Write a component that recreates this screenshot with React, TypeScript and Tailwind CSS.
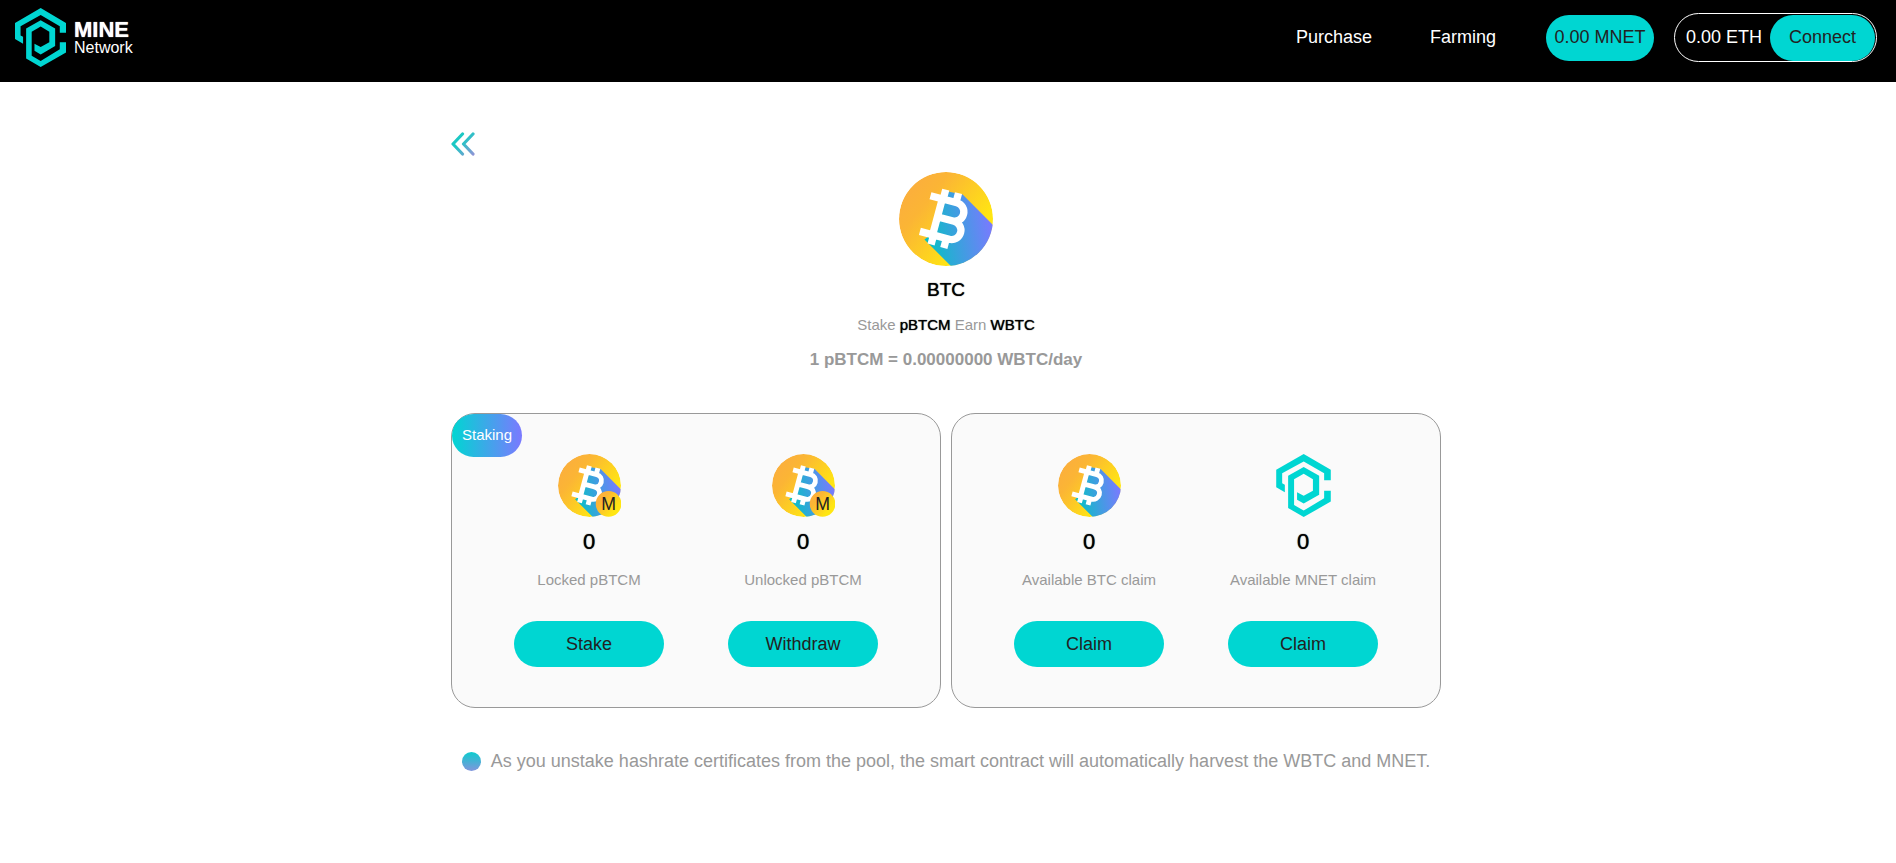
import type { ReactNode } from 'react';

const strong = '[text-shadow:0_0_1px_currentColor]';

function MineMark({ className }: { className: string }) {
  return (
    <svg viewBox="0 0 55 63.5" className={className} aria-hidden="true" fill="#00d6d2">
      <path d="M0 16 27.700 0 55 16V26.500H48.300V19.500L27.700 7.500 6 19.500V29.500L8.700 31V38.500L0 33.500Z" />
      <path d="M12 22 27.700 13.200 43.300 22V41L27.700 50 21 46V38.500L27.700 42 37 37V25.500L27.700 20 18 25.500V51.500L27.700 57 48.300 44.500V37H55V48L27.700 63.500 12 54.500Z" />
    </svg>
  );
}

function BtcCoin({ id, className, badge = false }: { id: string; className: string; badge?: boolean }) {
  return (
    <svg viewBox="0 0 96 96" className={className} role="img" aria-label="Bitcoin">
      <defs>
        <linearGradient id={`${id}-gold`} x1="0.1" y1="0.25" x2="0.85" y2="0.85">
          <stop offset="0" stopColor="#fbb03b" />
          <stop offset="0.200" stopColor="#fbb535" />
          <stop offset="0.850" stopColor="#ffe612" />
        </linearGradient>
        <linearGradient id={`${id}-shade`} x1="24" y1="68" x2="96" y2="56" gradientUnits="userSpaceOnUse">
          <stop offset="0" stopColor="#00c5c0" />
          <stop offset="1" stopColor="#7b79ff" />
        </linearGradient>
        <clipPath id={`${id}-clip`}>
          <circle cx="48" cy="48" r="48" />
        </clipPath>
      </defs>
      <g clipPath={`url(#${id}-clip)`}>
        <circle cx="48" cy="48" r="48" fill={`url(#${id}-gold)`} />
        <path d="M50 20 65 23 110 68V110H67L26 69 38 60Z" fill={`url(#${id}-shade)`} />
      </g>
      <g fill="none" stroke="#fff" strokeWidth="7.5" transform="translate(47.5 48) rotate(15)">
        <path d="M-21-19H7a9.500 9.500 0 0 1 0 19H-8M7 0H9a9.500 9.500 0 0 1 0 19H-22M-8.500-19V19M-7.500-29V-18M6-29V-18M-7.500 18V29M6 18V29" />
      </g>
      {badge && (
        <>
          <circle cx="77" cy="76" r="19.5" fill={`url(#${id}-gold)`} />
          <text x="77" y="85.5" textAnchor="middle" fontSize="27" fill="#222" className="font-['Liberation_Sans',Arial,sans-serif]">
            M
          </text>
        </>
      )}
    </svg>
  );
}

function Column({ icon, label, action }: { icon: ReactNode; label: string; action: string }) {
  return (
    <div className="flex w-[150px] flex-col items-center">
      {icon}
      <div className={`mt-3 text-[22px] leading-[26px] text-black ${strong}`}>0</div>
      <p className="mt-4 text-[15px] leading-[18px] whitespace-nowrap text-[#999]">{label}</p>
      <button type="button" className="mt-8 h-[46px] w-full rounded-full bg-[#00d6d2] text-[18px] text-[#222]">
        {action}
      </button>
    </div>
  );
}

function Card({ children }: { children: ReactNode }) {
  return (
    <section className="relative flex flex-1 justify-center gap-16 rounded-[24px] border border-[#999] bg-[#fafafa] py-10">
      {children}
    </section>
  );
}

export default function App() {
  return (
    <div className="min-h-screen bg-white font-['Liberation_Sans',Arial,sans-serif]">
      <header className="flex h-[82px] items-start justify-between bg-black pr-[19px] pl-[15px]">
        <a href="#" className="flex gap-2 pt-2 text-white">
          <MineMark className="h-[59px] w-[51px]" />
          <span className="flex flex-col pt-3">
            <span className={`text-[22px] leading-5 font-bold ${strong}`}>MINE</span>
            <span className="text-[16px] leading-4">Network</span>
          </span>
        </a>
        <div className="flex items-center pt-[13px] text-[18px]">
          <nav className="mr-[50px] flex gap-[58px] text-white">
            <a href="#">Purchase</a>
            <a href="#">Farming</a>
          </nav>
          <span className="mr-5 flex h-[46px] w-[108px] items-center justify-center rounded-full bg-[#00d6d2] text-[#222]">
            0.00 MNET
          </span>
          <div className="flex h-[49px] w-[203px] items-center justify-between rounded-full border border-white pr-px pl-[11px] text-white">
            <span>0.00 ETH</span>
            <button type="button" className="h-[46px] w-[105px] rounded-full bg-[#00d6d2] text-[#222]">
              Connect
            </button>
          </div>
        </div>
      </header>

      <main className="pr-1">
        <div className="mx-auto max-w-[990px] pt-[50px]">
          <button type="button" aria-label="Back" className="block">
            <svg viewBox="0 0 24 24" className="size-6" fill="none" strokeWidth="3.2" strokeLinecap="round" strokeLinejoin="round">
              <defs>
                <linearGradient id="back" x1="0" y1="0" x2="24" y2="24" gradientUnits="userSpaceOnUse">
                  <stop offset="0.400" stopColor="#1cc8c4" />
                  <stop offset="1" stopColor="#9a8fd8" />
                </linearGradient>
              </defs>
              <path d="M11.500 2 2 12l9.500 10M22 2 12.500 12 22 22" stroke="url(#back)" />
            </svg>
          </button>

          <div className="mt-4 flex flex-col items-center">
            <BtcCoin id="pool" className="size-[94px]" />
            <h1 className={`mt-3 text-[19px] leading-6 text-black ${strong}`}>BTC</h1>
            <p className="mt-[11px] text-[15px] leading-6 text-[#999]">
              Stake <span className={`text-black ${strong}`}>pBTCM</span> Earn{' '}
              <span className={`text-black ${strong}`}>WBTC</span>
            </p>
            <p className="mt-[11px] text-[17px] leading-6 font-bold text-[#999]">1 pBTCM = 0.00000000 WBTC/day</p>
          </div>

          <div className="mt-[41px] flex gap-[10px]">
            <Card>
              <span className="absolute top-0 left-0 flex h-[43px] items-center rounded-full bg-linear-to-r/srgb from-[#00d6d2] to-[#7b79ff] px-[10px] text-[15px] text-white">
                Staking
              </span>
              <Column icon={<BtcCoin id="locked" badge className="size-[63px]" />} label="Locked pBTCM" action="Stake" />
              <Column icon={<BtcCoin id="unlocked" badge className="size-[63px]" />} label="Unlocked pBTCM" action="Withdraw" />
            </Card>
            <Card>
              <Column icon={<BtcCoin id="claim" className="size-[63px]" />} label="Available BTC claim" action="Claim" />
              <Column icon={<MineMark className="h-[63px] w-[55px]" />} label="Available MNET claim" action="Claim" />
            </Card>
          </div>

          <div className="mt-[41px] flex items-center justify-center gap-[10px] text-[18px] leading-6 text-[#999]">
            <span className="size-[19px] shrink-0 rounded-full bg-linear-to-b/srgb from-[#0cccce] to-[#8295dc]" />
            <p>
              As you unstake hashrate certificates from the pool, the smart contract will automatically harvest the WBTC
              and MNET.
            </p>
          </div>
        </div>
      </main>
    </div>
  );
}
